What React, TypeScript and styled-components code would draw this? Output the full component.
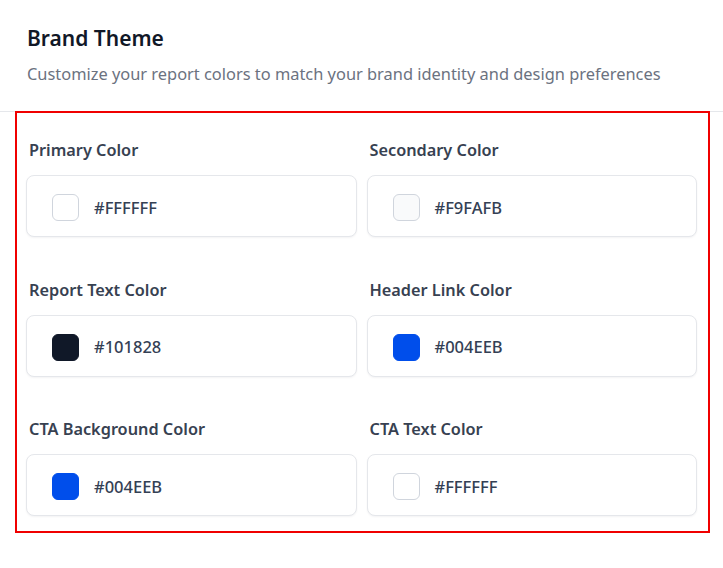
import React from 'react'
import styled, { createGlobalStyle } from 'styled-components'

const GlobalStyle = createGlobalStyle`
  body {
    margin: 0;
    background: #ffffff;
    font-family: 'Noto Sans', 'Open Sans', Arial, sans-serif;
    -webkit-font-smoothing: antialiased;
  }
`

const Page = styled.div`
  width: 723px;
  min-height: 568px;
  background: #ffffff;
`

const Header = styled.header`
  padding: 22px 27px 0;
  height: 112px;
  box-sizing: border-box;
  border-bottom: 1px solid #e5e7eb;
`

const Title = styled.h2`
  margin: 0;
  font-size: 21px;
  line-height: 32px;
  font-weight: 600;
  color: #111827;
`

const Subtitle = styled.p`
  margin: 8px 0 0;
  font-size: 16.4px;
  line-height: 24px;
  color: #6b7280;
`

// highlighted group of colour pickers
const ThemeSection = styled.section`
  margin: -1px 13px 0 15px;
  border: 2px solid #f00000;
  padding: 25px 11px 15px 9px;
  display: grid;
  grid-template-columns: 1fr 1fr;
  column-gap: 10px;
  row-gap: 40.5px;
`

const Field = styled.div`
  display: flex;
  flex-direction: column;
  gap: 13px;
`

const Label = styled.label`
  padding-left: 3px;
  font-size: 16.3px;
  line-height: 24px;
  font-weight: 600;
  color: #374151;
`

const ColorInput = styled.div`
  height: 62px;
  box-sizing: border-box;
  display: flex;
  align-items: center;
  gap: 15px;
  padding: 3px 0 0 25px;
  border: 1px solid #e5e7eb;
  border-radius: 8px;
  background: #ffffff;
  box-shadow: 0 1px 2px rgba(16, 24, 40, 0.05);
`

const Swatch = styled.span<{ $color: string; $light: boolean }>`
  width: 27px;
  height: 27px;
  box-sizing: border-box;
  border-radius: 6px;
  background: ${({ $color }) => $color};
  border: 1px solid ${({ $color, $light }) => ($light ? '#d0d5dd' : $color)};
  flex-shrink: 0;
`

const HexValue = styled.span`
  font-size: 16.5px;
  line-height: 24px;
  font-weight: 500;
  color: #344054;
`

const FIELDS = [
  { label: 'Primary Color', value: '#FFFFFF', light: true },
  { label: 'Secondary Color', value: '#F9FAFB', light: true },
  { label: 'Report Text Color', value: '#101828', light: false },
  { label: 'Header Link Color', value: '#004EEB', light: false },
  { label: 'CTA Background Color', value: '#004EEB', light: false },
  { label: 'CTA Text Color', value: '#FFFFFF', light: true }
]

export default function App() {
  return (
    <Page>
      <GlobalStyle />
      <Header>
        <Title>Brand Theme</Title>
        <Subtitle>Customize your report colors to match your brand identity and design preferences</Subtitle>
      </Header>
      <ThemeSection>
        {FIELDS.map((f) => (
          <Field key={f.label}>
            <Label>{f.label}</Label>
            <ColorInput>
              <Swatch $color={f.value} $light={f.light} />
              <HexValue>{f.value}</HexValue>
            </ColorInput>
          </Field>
        ))}
      </ThemeSection>
    </Page>
  )
}
